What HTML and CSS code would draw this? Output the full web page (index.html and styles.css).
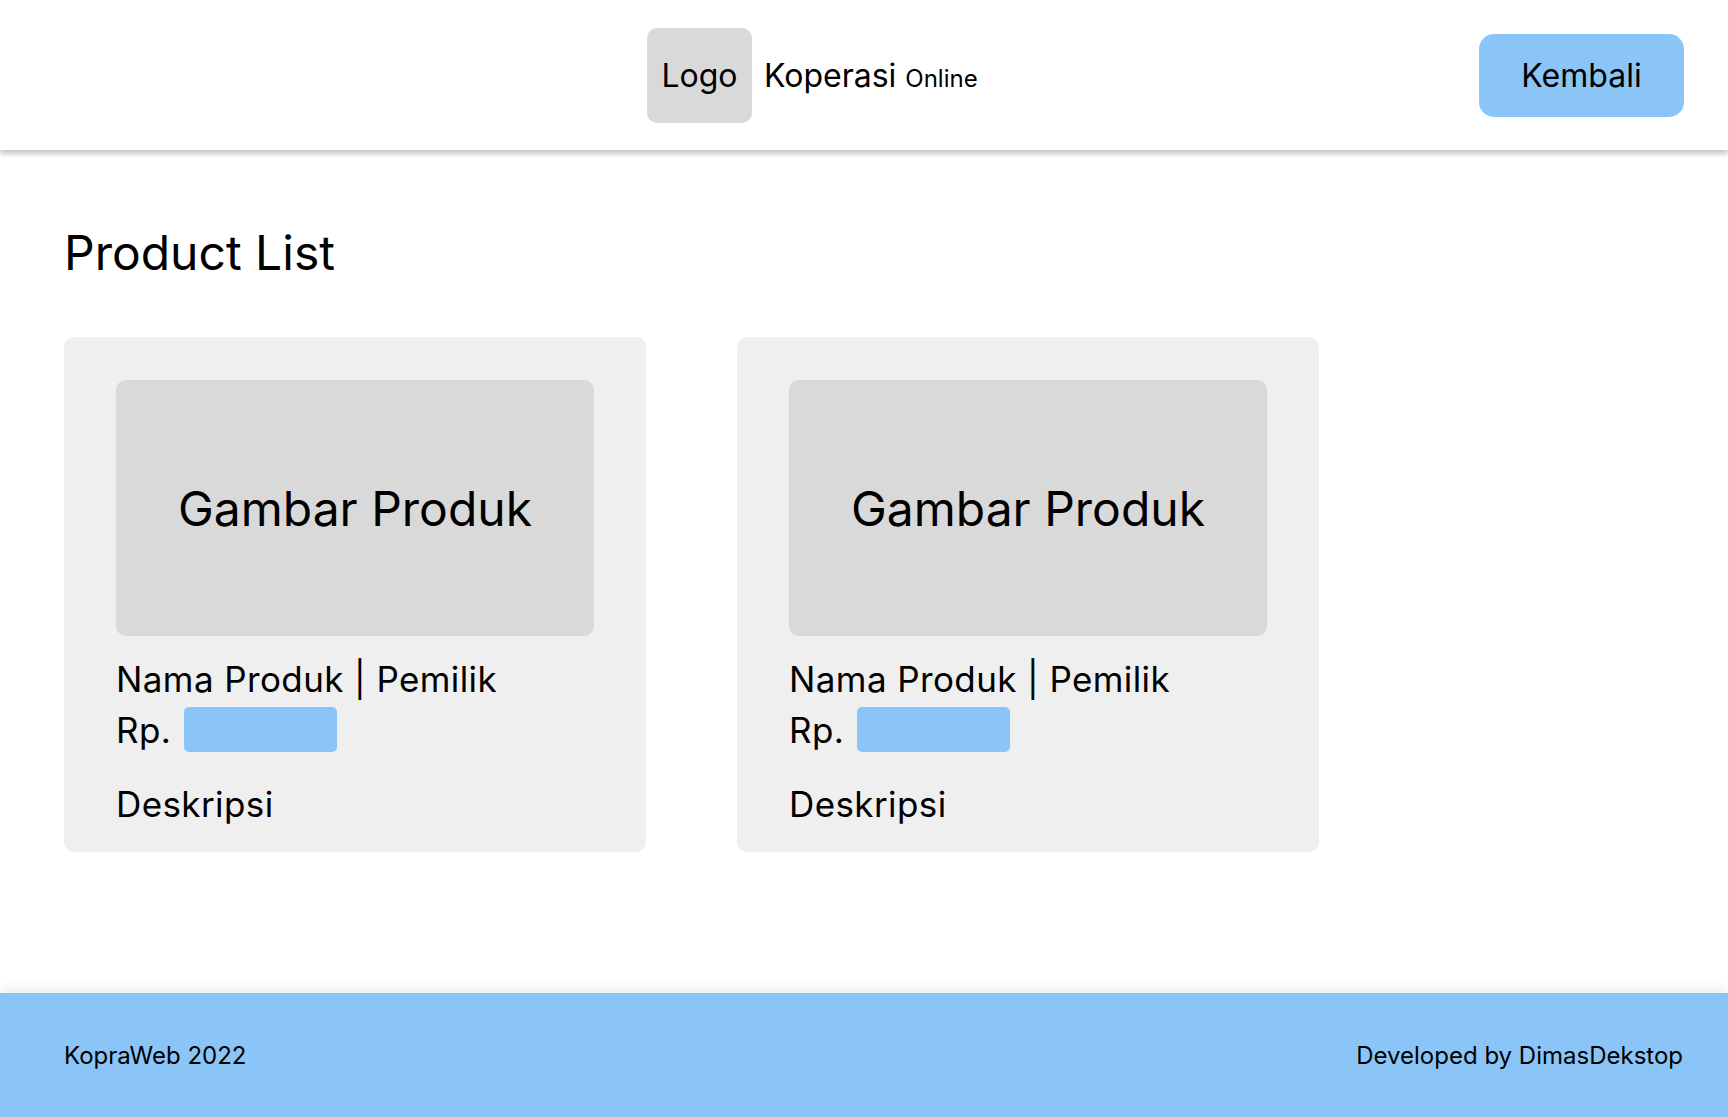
FILE: index.html
```html
<!DOCTYPE html>
<html lang="id">
<head>
<meta charset="utf-8">
<title>Koperasi Online</title>
<link rel="stylesheet" href="styles.css">
</head>
<body>
<header class="topbar">
  <div class="brand">
    <div class="logo">Logo</div>
    <div class="brand-name">Koperasi <small class="brand-sub">Online</small></div>
  </div>
  <a class="btn-back" href="#">Kembali</a>
</header>
<main class="content">
  <h1 class="page-title">Product List</h1>
  <div class="product-grid">
    <article class="card">
      <div class="card-image">Gambar Produk</div>
      <div class="card-title">Nama Produk | Pemilik</div>
      <div class="card-price"><span>Rp.</span><span class="price-box"></span></div>
      <div class="card-desc">Deskripsi</div>
    </article>
    <article class="card">
      <div class="card-image">Gambar Produk</div>
      <div class="card-title">Nama Produk | Pemilik</div>
      <div class="card-price"><span>Rp.</span><span class="price-box"></span></div>
      <div class="card-desc">Deskripsi</div>
    </article>
  </div>
</main>
<footer class="footer">
  <span>KopraWeb 2022</span>
  <span>Developed by DimasDekstop</span>
</footer>
</body>
</html>
```
FILE: styles.css
```css
* { box-sizing: border-box; }
html, body { margin: 0; padding: 0; }
body {
  font-family: Inter, "Noto Sans", "Liberation Sans", sans-serif;
  color: #000;
  background: #fff;
  min-height: 100vh;
  display: flex;
  flex-direction: column;
}
.topbar {
  height: 150px;
  flex: none;
  display: flex;
  align-items: center;
  justify-content: space-between;
  padding: 0 44px 0 647px;
  background: #fff;
  box-shadow: 0 4px 5px rgba(0, 0, 0, 0.22);
  position: relative;
  z-index: 2;
}
.brand {
  display: flex;
  align-items: center;
  gap: 12px;
}
.logo {
  width: 105px;
  height: 95px;
  border-radius: 10px;
  background: #d9d9d9;
  display: flex;
  align-items: center;
  justify-content: center;
  font-size: 32px;
}
.brand-name {
  font-size: 32px;
  line-height: 39px;
}
.brand-sub {
  font-size: 24px;
  line-height: 1;
}
.btn-back {
  width: 205px;
  height: 83px;
  border-radius: 15px;
  background: #8bc5f8;
  color: #000;
  text-decoration: none;
  font-size: 32px;
  display: flex;
  align-items: center;
  justify-content: center;
}
.content {
  flex: 1;
  padding: 74px 44px 40px 64px;
}
.page-title {
  margin: 0 0 55px;
  font-size: 48px;
  font-weight: 400;
  line-height: 58px;
}
.product-grid {
  display: flex;
  gap: 91px;
}
.card {
  width: 582px;
  background: #efefef;
  border-radius: 10px;
  padding: 43px 52px 28px;
  font-size: 35px;
  letter-spacing: 0.4px;
}
.card-image {
  height: 256px;
  border-radius: 10px;
  background: #d9d9d9;
  display: flex;
  align-items: center;
  justify-content: center;
  font-size: 48px;
  letter-spacing: 0;
  margin-bottom: 23px;
}
.card-title {
  line-height: 40px;
}
.card-price {
  margin-top: 8px;
  height: 45px;
  display: flex;
  align-items: center;
  gap: 13px;
}
.price-box {
  width: 153px;
  height: 45px;
  background: #8bc5f8;
  border-radius: 5px;
}
.card-desc {
  margin-top: 32px;
  line-height: 40px;
}
.footer {
  height: 124px;
  flex: none;
  background: #8bc5f8;
  display: flex;
  align-items: center;
  justify-content: space-between;
  padding: 0 45px 0 64px;
  font-size: 24px;
  box-shadow: 0 -4px 12px rgba(0, 0, 0, 0.08);
}
```
